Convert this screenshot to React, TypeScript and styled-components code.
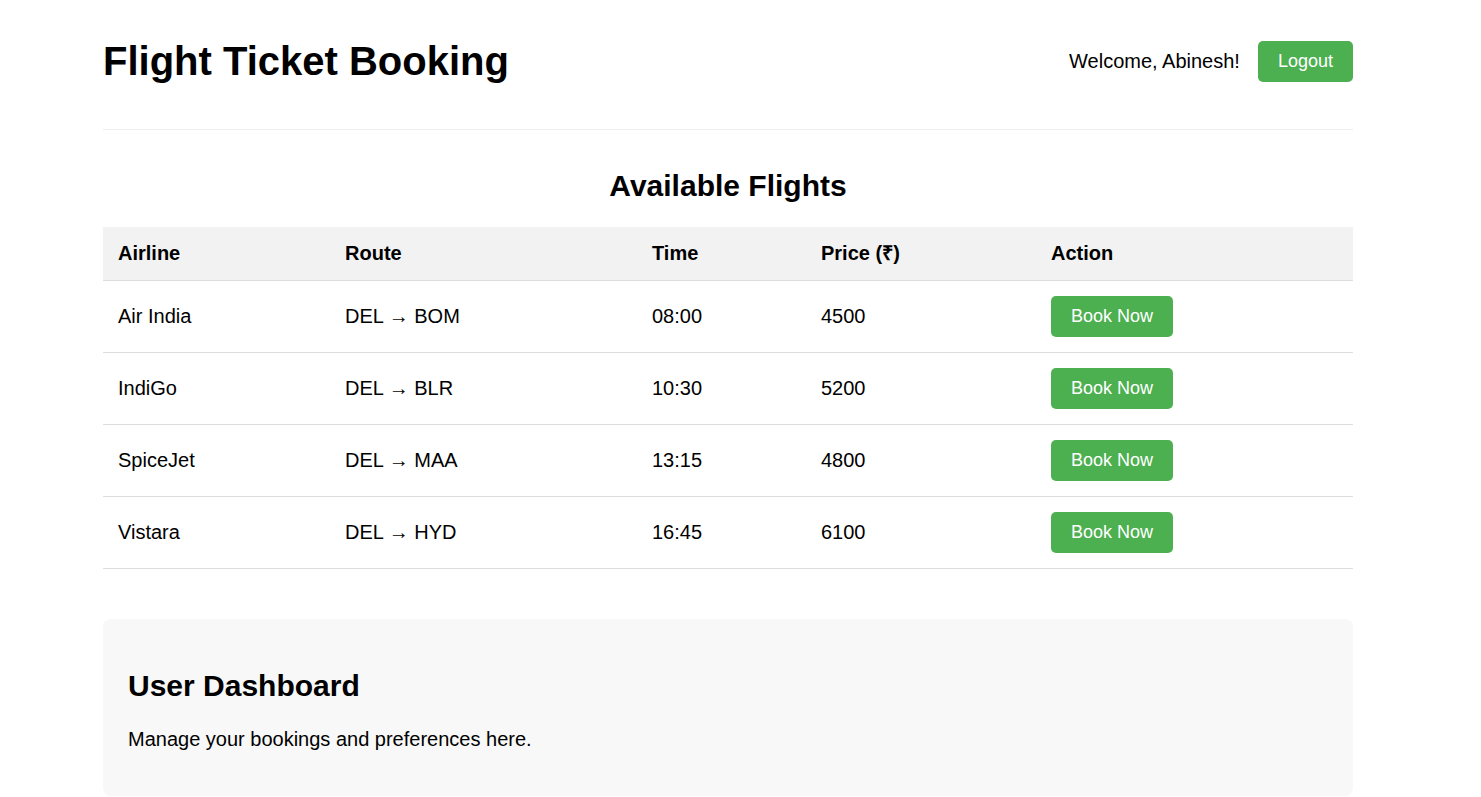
import React from "react";
import styled, { createGlobalStyle } from "styled-components";

const GlobalStyle = createGlobalStyle`
  html, body {
    margin: 0;
    padding: 0;
    background: #ffffff;
  }
  body {
    font-family: "Liberation Sans", Arial, sans-serif;
    font-size: 20px;
    color: #000000;
  }
`;

const Page = styled.div`
  padding: 12px 128px 0 103px;
`;

const Header = styled.header`
  display: flex;
  justify-content: space-between;
  align-items: center;
  padding-bottom: 18px;
  border-bottom: 1px solid #eeeeee;
  margin-bottom: 39px;
`;

const Title = styled.h1`
  font-size: 40px;
  font-weight: bold;
  margin: 0.67em 0;
`;

const UserArea = styled.div`
  display: flex;
  align-items: center;
  gap: 18px;
`;

const Welcome = styled.span`
  font-size: 20px;
`;

const GreenButton = styled.button`
  background: #4caf50;
  color: #ffffff;
  border: none;
  border-radius: 5px;
  padding: 10px 20px;
  font-family: "Liberation Sans", Arial, sans-serif;
  font-size: 18px;
  line-height: normal;
  cursor: pointer;
`;

const SectionTitle = styled.h2<{ $center?: boolean }>`
  font-size: 30px;
  font-weight: bold;
  margin: 0.83em 0;
  text-align: ${(p) => (p.$center ? "center" : "left")};
`;

const Table = styled.table`
  width: 100%;
  border-collapse: collapse;
`;

const HeadCell = styled.th`
  background: #f2f2f2;
  text-align: left;
  font-weight: bold;
  line-height: 23px;
  padding: 15px;
  border-bottom: 1px solid #dddddd;
`;

const Cell = styled.td`
  text-align: left;
  line-height: 23px;
  padding: 15px;
  border-bottom: 1px solid #dddddd;
  vertical-align: middle;
`;

const Dashboard = styled.section`
  margin-top: 50px;
  background: #f8f8f8;
  border-radius: 8px;
  padding: 25px;
`;

const Text = styled.p`
  margin: 20px 0;
`;

const flights = [
  { airline: "Air India", route: "DEL → BOM", time: "08:00", price: 4500 },
  { airline: "IndiGo", route: "DEL → BLR", time: "10:30", price: 5200 },
  { airline: "SpiceJet", route: "DEL → MAA", time: "13:15", price: 4800 },
  { airline: "Vistara", route: "DEL → HYD", time: "16:45", price: 6100 },
];

export default function App() {
  return (
    <>
      <GlobalStyle />
      <Page>
        <Header>
          <Title>Flight Ticket Booking</Title>
          <UserArea>
            <Welcome>Welcome, Abinesh!</Welcome>
            <GreenButton>Logout</GreenButton>
          </UserArea>
        </Header>
        <main>
          <SectionTitle $center>Available Flights</SectionTitle>
          <Table>
            <colgroup>
              <col style={{ width: 227 }} />
              <col style={{ width: 307 }} />
              <col style={{ width: 169 }} />
              <col style={{ width: 230 }} />
              <col style={{ width: 317 }} />
            </colgroup>
            <thead>
              <tr>
                <HeadCell>Airline</HeadCell>
                <HeadCell>Route</HeadCell>
                <HeadCell>Time</HeadCell>
                <HeadCell>Price (₹)</HeadCell>
                <HeadCell>Action</HeadCell>
              </tr>
            </thead>
            <tbody>
              {flights.map((f) => (
                <tr key={f.airline}>
                  <Cell>{f.airline}</Cell>
                  <Cell>{f.route}</Cell>
                  <Cell>{f.time}</Cell>
                  <Cell>{f.price}</Cell>
                  <Cell>
                    <GreenButton>Book Now</GreenButton>
                  </Cell>
                </tr>
              ))}
            </tbody>
          </Table>
          <Dashboard>
            <SectionTitle>User Dashboard</SectionTitle>
            <Text>Manage your bookings and preferences here.</Text>
          </Dashboard>
        </main>
      </Page>
    </>
  );
}
